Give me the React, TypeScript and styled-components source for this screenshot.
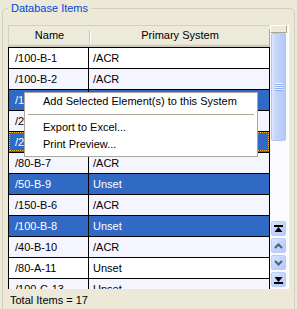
import React from "react";
import styled, { createGlobalStyle, css } from "styled-components";

const GlobalStyle = createGlobalStyle`
  html, body {
    margin: 0;
    padding: 0;
    background: #ECE9D8;
  }
  body {
    font-family: "Liberation Sans", Arial, sans-serif;
    font-size: 11px;
  }
`;

const Page = styled.div`
  position: relative;
  width: 297px;
  height: 309px;
  overflow: hidden;
  background: #ECE9D8;
  padding: 2px 2px 0 2px;
  box-sizing: border-box;
`;

const Group = styled.fieldset`
  margin: 0;
  border: 1px solid #D0D0BF;
  border-radius: 5px;
  padding: 10px 0 0 5px;
  height: 360px;
  box-sizing: border-box;
  min-width: 0;
`;

const Legend = styled.legend`
  color: #0046D5;
  padding: 0 3px;
  line-height: 13px;
  font-size: 11px;
`;

const GridArea = styled.div`
  display: flex;
  height: 264px;
`;

const Table = styled.div`
  width: 262px;
  display: flex;
  flex-direction: column;
  overflow: hidden;
`;

const Header = styled.div`
  display: grid;
  grid-template-columns: 81px 1fr;
  height: 22px;
  box-sizing: border-box;
  background: #EBEADB;
  border-top: 1px solid #D5D2C4;
  border-left: 1px solid #D5D2C4;
  box-shadow: inset 0 -1px 0 #CBC7B8, inset 0 -2px 0 #D6D2C2, inset 0 -3px 0 #E2DECD;
  flex-shrink: 0;
`;

const HeadCell = styled.div<{ $sep?: boolean }>`
  position: relative;
  text-align: center;
  line-height: 19px;
  color: #000;
  ${(p) =>
    p.$sep &&
    css`
      &::after {
        content: "";
        position: absolute;
        right: 0;
        top: 4px;
        bottom: 4px;
        width: 1px;
        background: #CBC7B8;
        box-shadow: 1px 0 0 #fff;
      }
    `}
  &:last-child::after {
    content: "";
    position: absolute;
    right: 0;
    top: 3px;
    bottom: 1px;
    width: 1px;
    background: #ACA899;
  }
`;

const Row = styled.div<{ $alt: boolean; $sel: boolean; $focus?: boolean }>`
  display: grid;
  grid-template-columns: 80px 1fr;
  height: 21px;
  box-sizing: border-box;
  border-top: 1px solid #000;
  border-left: 1px solid #000;
  border-right: 1px solid #000;
  flex-shrink: 0;
  background: ${(p) => (p.$sel ? "#316AC5" : p.$alt ? "#F5F5FF" : "#FFFFFF")};
  color: ${(p) => (p.$sel ? "#FFFFFF" : "#000000")};
  ${(p) =>
    p.$focus &&
    css`
      outline: 1px dotted #F2B33D;
      outline-offset: -2px;
    `}
`;

const Cell = styled.div<{ $first?: boolean }>`
  line-height: 20px;
  white-space: nowrap;
  overflow: hidden;
  padding-left: ${(p) => (p.$first ? "6px" : "4px")};
  border-right: ${(p) => (p.$first ? "1px solid #000" : "none")};
`;

const Scroll = styled.div`
  width: 19px;
  display: flex;
  flex-direction: column;
  background: #FBFBFD;
  box-shadow: inset -1px 0 0 #FFFFFF;
`;

const Cap = styled.div`
  height: 8px;
  box-sizing: border-box;
  margin-right: 2px;
  background: #EBEADB;
  border: 1px solid #ACA899;
  border-top-color: #FFFFFF;
  border-left-color: #FFFFFF;
  flex-shrink: 0;
`;

const Thumb = styled.div`
  height: 108px;
  margin: 0 3px 0 1px;
  box-sizing: border-box;
  border: 1px solid #B2C6F4;
  border-radius: 2px;
  background: linear-gradient(to right, #DDE7FE 0%, #C6D6FC 25%, #BACDFA 75%, #B3C7F7 100%);
  display: flex;
  align-items: center;
  justify-content: center;
  flex-shrink: 0;
`;

const Grip = styled.div`
  width: 8px;
  height: 8px;
  background: repeating-linear-gradient(to bottom, #EEF4FE 0 1px, #8CAEF0 1px 2px);
`;

const Track = styled.div`
  flex: 1;
`;

const ScrollBtn = styled.div`
  width: 15px;
  height: 15px;
  margin: 0 0 2px 1px;
  box-sizing: border-box;
  border: 1px solid #BBCDF6;
  border-radius: 2px;
  background: linear-gradient(135deg, #DCE6FE 0%, #C4D4FC 50%, #B6CAF8 100%);
  display: flex;
  align-items: center;
  justify-content: center;
  flex-shrink: 0;
`;

const Total = styled.div`
  margin-top: 5px;
  padding-left: 2px;
  line-height: 13px;
  color: #000;
`;

const Menu = styled.div`
  position: absolute;
  left: 24px;
  top: 92px;
  width: 234px;
  height: 65px;
  box-sizing: border-box;
  border: 1px solid #ACA899;
  background: #FFFFFF;
`;

const MenuItem = styled.div`
  height: 17px;
  line-height: 17px;
  padding-left: 18px;
  color: #000;
  white-space: nowrap;
`;

const MenuSep = styled.div`
  height: 1px;
  margin: 4px 3px;
  background: #ACA899;
`;

type Item = { name: string; sys: string; sel?: boolean; focus?: boolean };

const items: Item[] = [
  { name: "/100-B-1", sys: "/ACR" },
  { name: "/100-B-2", sys: "/ACR" },
  { name: "/100-B-3", sys: "/ACR", sel: true },
  { name: "/200-B-4", sys: "/ACR" },
  { name: "/200-B-5", sys: "/ACR", sel: true, focus: true },
  { name: "/80-B-7", sys: "/ACR" },
  { name: "/50-B-9", sys: "Unset", sel: true },
  { name: "/150-B-6", sys: "/ACR" },
  { name: "/100-B-8", sys: "Unset", sel: true },
  { name: "/40-B-10", sys: "/ACR" },
  { name: "/80-A-11", sys: "Unset" },
  { name: "/100-C-13", sys: "Unset" },
];

const EndIcon = ({ down }: { down?: boolean }) => (
  <svg width="9" height="8" viewBox="0 0 9 8" style={down ? { transform: "scaleY(-1)" } : undefined}>
    <rect x="0" y="0" width="9" height="2" fill="#000" />
    <path d="M4.5 2 L8.5 7 L0.5 7 Z" fill="#000" />
  </svg>
);

const Chevron = ({ down }: { down?: boolean }) => (
  <svg width="9" height="6" viewBox="0 0 9 6" style={down ? { transform: "scaleY(-1)" } : undefined}>
    <path d="M1 5 L4.5 1.5 L8 5" fill="none" stroke="#4D6185" strokeWidth="2" />
  </svg>
);

export default function App() {
  return (
    <>
      <GlobalStyle />
      <Page>
        <Group>
          <Legend>Database Items</Legend>
          <GridArea>
            <Table>
              <Header>
                <HeadCell $sep>Name</HeadCell>
                <HeadCell>Primary System</HeadCell>
              </Header>
              {items.map((it, i) => (
                <Row key={it.name} $alt={i % 2 === 1} $sel={!!it.sel} $focus={it.focus}>
                  <Cell $first>{it.name}</Cell>
                  <Cell>{it.sys}</Cell>
                </Row>
              ))}
            </Table>
            <Scroll>
              <Cap />
              <Thumb>
                <Grip />
              </Thumb>
              <Track />
              <ScrollBtn>
                <EndIcon />
              </ScrollBtn>
              <ScrollBtn>
                <Chevron />
              </ScrollBtn>
              <ScrollBtn>
                <Chevron down />
              </ScrollBtn>
              <ScrollBtn>
                <EndIcon down />
              </ScrollBtn>
            </Scroll>
          </GridArea>
          <Total>Total Items = 17</Total>
        </Group>
        <Menu>
          <MenuItem>Add Selected Element(s) to this System</MenuItem>
          <MenuSep />
          <MenuItem>Export to Excel...</MenuItem>
          <MenuItem>Print Preview...</MenuItem>
        </Menu>
      </Page>
    </>
  );
}
